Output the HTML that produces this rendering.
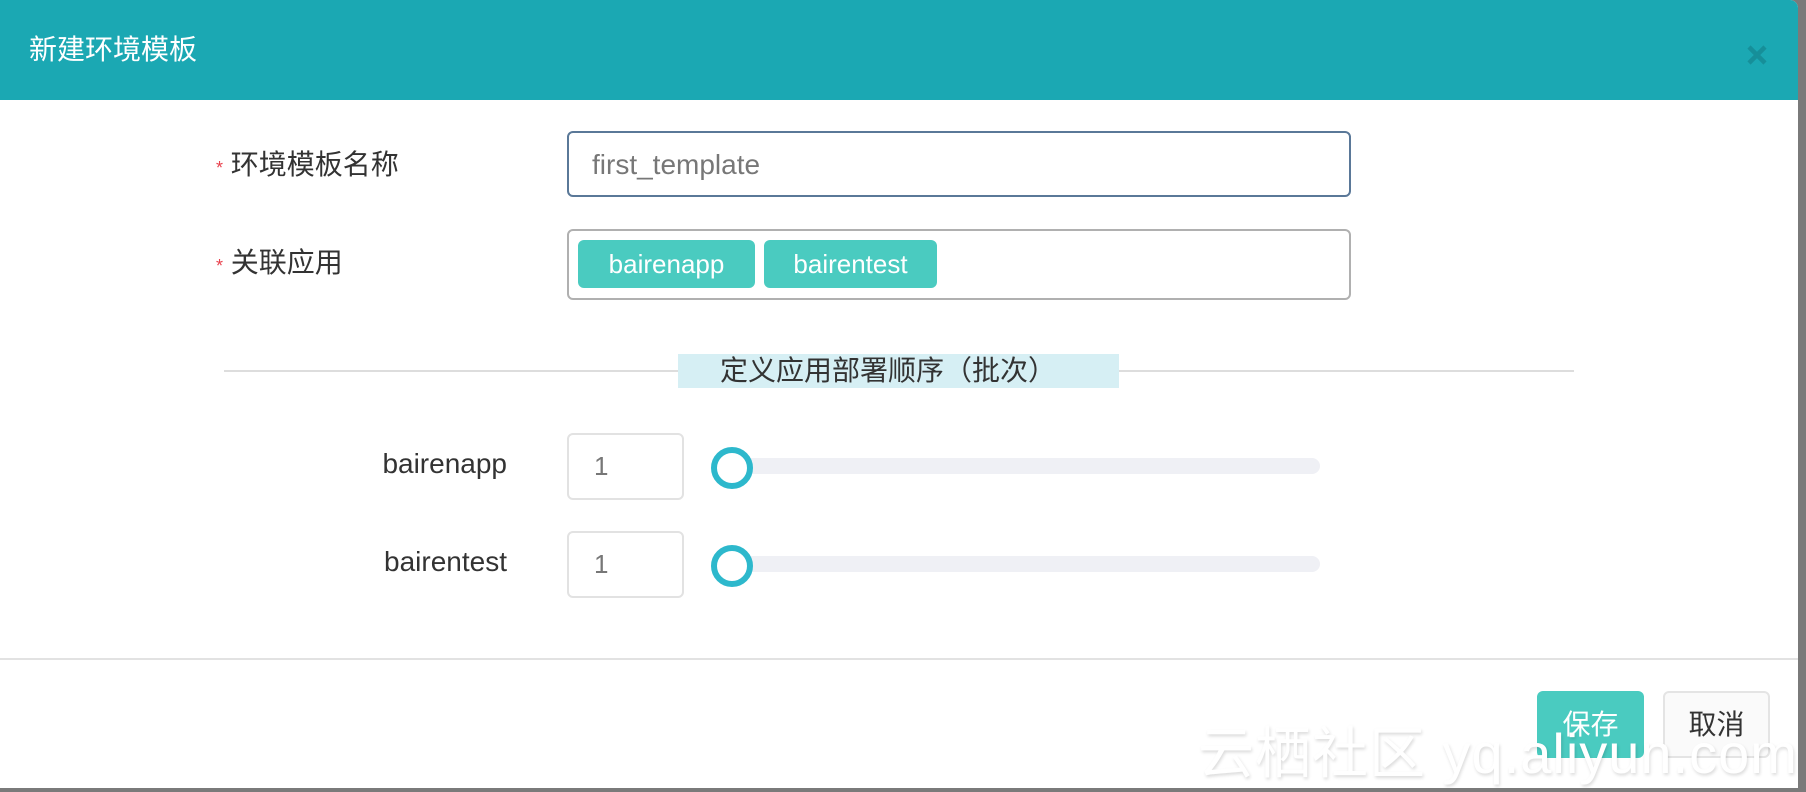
<!DOCTYPE html>
<html><head><meta charset="utf-8"><style>
*{margin:0;padding:0;box-sizing:border-box}
body{width:1806px;height:792px;background:#7a7a7a;position:relative;overflow:hidden;font-family:"Liberation Sans","Noto Sans CJK SC",sans-serif;color:#333}
.modal{position:absolute;left:0;top:0;width:1798px;height:788px;background:#fff;border-top-right-radius:8px;overflow:hidden}
.hd{position:absolute;left:0;top:0;width:100%;height:100px;background:#1ba8b3}
.title{position:absolute;left:29px;top:33px;font-size:28px;line-height:34px;color:#fff}
.x{position:absolute;left:1744px;top:42px;width:26px;height:26px}
.abs{position:absolute}
.lab{font-size:28px;line-height:32px;color:#333}
.star{color:#e8414d;font-size:18px}
.inp{border:2px solid #5a7898;border-radius:6px;background:#fff}
.tag{position:absolute;top:240px;height:48px;background:#4acbc0;border-radius:6px;color:#fff;font-size:26px;line-height:48px;text-align:center}
.num{position:absolute;left:567px;width:117px;height:67px;border:2px solid #e2e2e2;border-radius:6px;font-size:26px;line-height:63px;padding-left:25px;color:#777}
.track{position:absolute;left:720px;width:600px;height:16px;background:#eff0f5;border-radius:8px}
.knob{position:absolute;left:711px;width:42px;height:42px;border:6px solid #2db8cc;border-radius:50%;background:#fff}
.btn{position:absolute;top:691px;height:67px;border-radius:6px;font-size:28px;line-height:67px;text-align:center}
.wm{position:absolute;left:1198px;top:722px;font-size:56px;line-height:64px;color:#fff;text-shadow:1px 2px 3px rgba(0,0,0,.15);letter-spacing:1px}
</style></head><body>
<div class="modal">
 <div class="hd">
  <div class="title">新建环境模板</div>
  <svg class="x" viewBox="0 0 26 26"><path d="M5 5L21 21M21 5L5 21" stroke="#168f99" stroke-width="4.5"/></svg>
 </div>
 <div class="abs lab" style="left:216px;top:149px"><span class="star">*</span> 环境模板名称</div>
 <div class="abs inp" style="left:567px;top:131px;width:784px;height:66px"></div>
 <div class="abs" style="left:592px;top:149px;font-size:28px;line-height:32px;color:#777">first_template</div>
 <div class="abs lab" style="left:216px;top:247px"><span class="star">*</span> 关联应用</div>
 <div class="abs" style="left:567px;top:229px;width:784px;height:71px;border:2px solid #b0b0b0;border-radius:6px"></div>
 <div class="tag" style="left:578px;width:177px">bairenapp</div>
 <div class="tag" style="left:764px;width:173px">bairentest</div>
 <div class="abs" style="left:224px;top:370px;width:1350px;height:2px;background:#ddd"></div>
 <div class="abs" style="left:678px;top:354px;width:441px;height:34px;background:#d6eff4;font-size:28px;line-height:34px;padding-left:42px;color:#333;white-space:nowrap">定义应用部署顺序（批次）</div>
 <div class="abs" style="left:300px;top:448px;width:207px;text-align:right;font-size:28px;line-height:32px">bairenapp</div>
 <div class="num" style="top:433px">1</div>
 <div class="track" style="top:458px"></div>
 <div class="knob" style="top:447px"></div>
 <div class="abs" style="left:300px;top:546px;width:207px;text-align:right;font-size:28px;line-height:32px">bairentest</div>
 <div class="num" style="top:531px">1</div>
 <div class="track" style="top:556px"></div>
 <div class="knob" style="top:545px"></div>
 <div class="abs" style="left:0;top:658px;width:100%;height:2px;background:#e2e2e2"></div>
 <div class="btn" style="left:1537px;width:107px;background:#4acbc0;color:#fff">保存</div>
 <div class="btn" style="left:1663px;width:107px;background:#fafafa;border:2px solid #e4e4e4;line-height:63px;color:#333">取消</div>
 <div class="wm">云栖社区 yq.aliyun.com</div>
</div>
</body></html>
